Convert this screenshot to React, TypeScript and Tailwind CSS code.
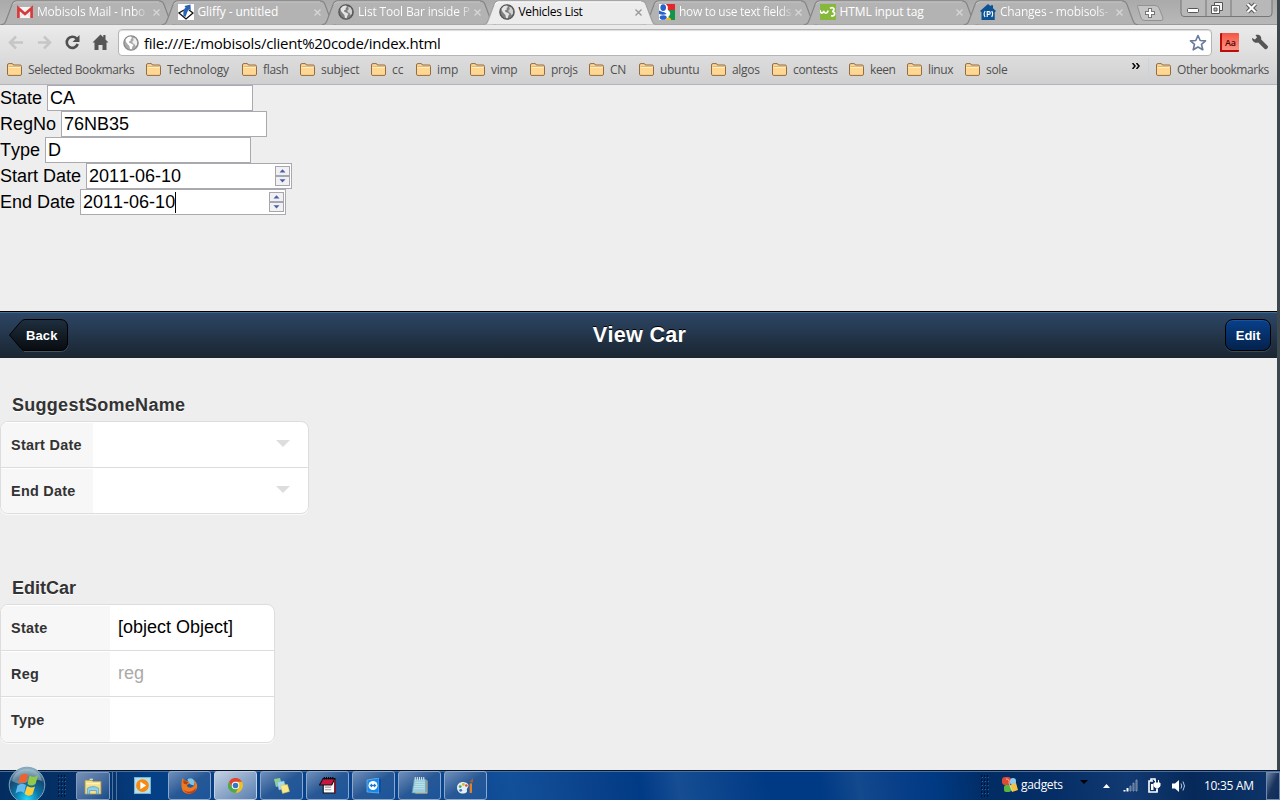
import React from "react";

type IconProps = { children: React.ReactNode; size?: number; box?: string };

function Icon({ children, size = 16, box = "0 0 16 16" }: IconProps) {
  return (
    <svg width={size} height={size} viewBox={box} className="block shrink-0" fill="none">
      {children}
    </svg>
  );
}

function Globe({ light = false }: { light?: boolean }) {
  const c = light ? "#8b8b8b" : "#555";
  return (
    <Icon>
      <circle cx="8" cy="8" r="7.2" fill={c} stroke={c} strokeWidth="1.2" />
      <circle cx="8" cy="8" r="6.4" fill={light ? "#aaa" : "#808080"} />
      <path d="M2.500 4.500L5 2l3-.5 1 1.500-1.500 1L8 5.200 6 6.500l.2 1.300L9 9l1.500 1-1.200 1.800-.6 2.400L7 14l-.6-3L4.500 9 3 7z" fill={light ? "#fff" : "#e4e4e4"} />
      <path d="M10 3l2.500.5L14 6.500v3l-1.500 1.700-1-2.200-1.800-.8L9.500 6l1.400-.8z" fill={light ? "#f2f2f2" : "#d0d0d0"} />
    </Icon>
  );
}

const mail = (
  <Icon>
    <rect y="3" width="16" height="11" fill="#f5f5f5" />
    <path d="M3 13L6.5 8.5M13 13L9.5 8.5" stroke="#ddd" />
    <path d="M1.4 14V4.2L8 10l6.6-5.8V14" stroke="#d8393a" strokeWidth="2.7" />
  </Icon>
);

const gliffy = (
  <Icon>
    <rect width="16" height="16" fill="#fff" />
    <path d="M6 6L1 9l7 6 7-6-4-3" stroke="#111" strokeWidth="1.3" />
    <path d="M5.500 12c-.5-4 0-7 2-8.500L6.500 2 12.500.5l.3 6-1.500-1.200C9 7 9 9.500 7.500 13z" fill="#2862b5" />
  </Icon>
);

const google = (
  <Icon>
    <rect width="16" height="16" rx="1" fill="#fff" />
    <path d="M7 0h9v6H9z" fill="#e3262c" />
    <path d="M8 6h8v10h-6z" fill="#149447" />
    <path d="M5 16c0-3 6-3 7-1v1z" fill="#f8b517" />
    <path d="M6 0c4 2 3 4 2 5.500 4 2 4 5 1.500 7L7 16H0V0z" fill="#fff" />
    <ellipse cx="4.200" cy="3.600" rx="2.800" ry="3.400" fill="#2861cc" />
    <path d="M0 6.500c3 2 6 1 7.500 3.500-2 1-5 1-7.500 0z" fill="#2861cc" />
    <ellipse cx="4.200" cy="13.500" rx="3.500" ry="2.300" fill="#2861cc" />
    <path d="M7 16c0-2 3-3 4-1v1z" fill="#f8b517" />
  </Icon>
);

const w3 = (
  <Icon>
    <rect width="16" height="16" fill="#86b83c" />
    <path d="M0 6c.5 4 3 4 3.700 1 .8 3 3.500 3 4.500-.5M10 4.200c4-2 5.500 2 2.200 3.300 3.500.3 3.400 5-1.200 4.300" stroke="#fff" strokeWidth="1.6" />
  </Icon>
);

const changes = (
  <Icon>
    <path d="M8 0l2.700 2.200V1.200H13v3L16 7l-1.300 1.300V16H1.500V8.300L0 7z" fill="#0c5394" />
    <path d="M5.200 7C3.800 9 4 11.400 5.100 13M11.800 7c1.200 2 1.100 4-.1 6M7.200 13V7.600h1.600c2 0 2 2.800 0 2.800H7.200" stroke="#fff" strokeWidth="1.100" />
  </Icon>
);

type TabInfo = { title: string; icon: React.ReactNode; active?: boolean; cls: string };

const fade85 = "bg-gradient-to-r from-white from-90% to-[#c8c8c8] bg-clip-text text-transparent";

const tabs: TabInfo[] = [
  { title: "Mobisols Mail - Inbo", icon: mail, cls: `tracking-[-0.2px] ${fade85}` },
  { title: "Gliffy - untitled", icon: gliffy, cls: "tracking-[-0.1px] text-white" },
  { title: "List Tool Bar inside P", icon: <Globe />, cls: `tracking-[-0.17px] ${fade85}` },
  { title: "Vehicles List", icon: <Globe />, active: true, cls: "tracking-[-0.3px] text-black" },
  { title: "how to use text fields", icon: google, cls: `tracking-[-0.32px] ${fade85}` },
  { title: "HTML input tag", icon: w3, cls: "tracking-[-0.1px] text-white" },
  { title: "Changes - mobisols-", icon: changes, cls: `tracking-[-0.22px] ${fade85}` },
];

function Tab({ title, icon, active, cls }: TabInfo) {
  return (
    <div className={`relative flex h-[25px] w-[160.5px] shrink-0 items-center pl-[13px] ${active ? "z-10" : ""}`}>
      <svg className="absolute left-[-3px] top-0" width="175" height="25" viewBox="0 0 175 25">
        <path
          d="M0 24.5C4 24.5 4.5 22 6 18L11 4.5C12 2 13 .8 15.5 .8H158C161 .8 162 2 163 4.5L168 18C169.5 22 170 24.5 174 24.5"
          fill={active ? "#ececec" : "#b3b3b3"}
          stroke={active ? "#a0a0a0" : "#858585"}
          strokeWidth="1.2"
        />
        <path d="M12 4.5Q13 1.9 15.5 1.9H158" fill="none" stroke={active ? "#fff" : "#c8c8c8"} />
      </svg>
      <div className="relative -top-px flex w-full items-center pt-px">
        {icon}
        <div className="ml-1 flex w-[112px]">
          <span className={`whitespace-nowrap text-[12px] leading-[18px] ${cls}`}>{title}</span>
        </div>
        <svg width="7" height="7" viewBox="0 0 7 7" className="ml-[4px] mt-px shrink-0">
          <path d="M.5 .5l6 6M6.5 .5l-6 6" stroke={active ? "#999" : "#d6d6d6"} strokeWidth="1.4" />
        </svg>
      </div>
    </div>
  );
}

function Folder() {
  return (
    <svg width="15" height="13" viewBox="0 0 15 13" className="block shrink-0">
      <path d="M.5 11.3V2Q.5 .6 2 .6H5Q6 .6 6.4 2H13Q14.5 2 14.5 3.5V11.2Q14.5 12.4 13 12.4H2Q.5 12.4 .5 11.3z" fill="#fed893" stroke="#946b42" />
      <path d="M1.5 4.4H13.5" stroke="#fff0ca" />
      <path d="M1.5 3.4H13.5" stroke="#c79b62" strokeWidth=".6" />
    </svg>
  );
}

const bookmarks = [
  { name: "Selected Bookmarks", w: "w-[139px]", t: "tracking-[-0.4px]" },
  { name: "Technology", w: "w-[96px]", t: "tracking-[-0.2px]" },
  { name: "flash", w: "w-[58px]", t: "tracking-[-0.3px]" },
  { name: "subject", w: "w-[71px]", t: "tracking-[-0.3px]" },
  { name: "cc", w: "w-[45px]", t: "tracking-[-0.1px]" },
  { name: "imp", w: "w-[54px]", t: "tracking-[-0.1px]" },
  { name: "vimp", w: "w-[60px]", t: "tracking-[-0.3px]" },
  { name: "projs", w: "w-[59px]", t: "tracking-[-0.3px]" },
  { name: "CN", w: "w-[50px]", t: "tracking-[-0.3px]" },
  { name: "ubuntu", w: "w-[72px]", t: "tracking-[-0.3px]" },
  { name: "algos", w: "w-[61px]", t: "tracking-[-0.3px]" },
  { name: "contests", w: "w-[77px]", t: "tracking-[-0.3px]" },
  { name: "keen", w: "w-[58px]", t: "tracking-[-0.4px]" },
  { name: "linux", w: "w-[58px]", t: "tracking-[-0.4px]" },
  { name: "sole", w: "w-[60px]", t: "tracking-[-0.3px]" },
];

function Bookmark({ name, w, t }: { name: string; w: string; t: string }) {
  return (
    <div className={`flex shrink-0 items-center gap-[6px] ${w}`}>
      <Folder />
      <span className={`whitespace-nowrap text-[12px] leading-4 text-[#505050] ${t}`}>{name}</span>
    </div>
  );
}

function BrowserChrome() {
  return (
    <div className="h-[85px] shrink-0 font-['Open_Sans','Noto_Sans',sans-serif]">
      <div className="flex h-[25px] bg-gradient-to-b from-[#aaa] to-[#b9b9b9] pl-1 shadow-[inset_0_-1px_#999]">
        {tabs.map((t) => (
          <Tab key={t.title} {...t} />
        ))}
        <svg width="28" height="17" viewBox="0 0 28 17" className="ml-2 mt-[5px] shrink-0">
          <path d="M1.5 1.5Q.5 .5 3 .5H19Q22 .5 23 3L27 13Q27.5 15.5 25 15.5H9Q6 15.5 5 13z" fill="#c4c4c4" stroke="#929292" />
          <path d="M9 8H19M14 3V13" stroke="#777" strokeWidth="4" />
          <path d="M10 8H18M14 4V12" stroke="#fff" strokeWidth="2" />
        </svg>
        <svg width="94" height="18" viewBox="0 0 94 18" className="ml-[16px] shrink-0">
          <path d="M1 0V13Q1 16.5 4 16.5H89Q92 16.5 92 13V0" fill="#b8b8b8" stroke="#777" />
          <path d="M26 0V16M51 0V16" stroke="#777" />
          <rect x="7.500" y="8.500" width="11" height="4" rx="1" fill="#fff" stroke="#555" />
          <path d="M34.500 2.500h8v8h-8z" fill="#f4f4f4" stroke="#555" />
          <path d="M31.500 5.500h8v8h-8z" fill="#fff" stroke="#555" />
          <path d="M34 8h3v3h-3z" fill="#bbb" stroke="#555" />
          <path d="M67.500 4l8 8M75.500 4l-8 8" stroke="#555" strokeWidth="4.200" />
          <path d="M67.500 4l8 8M75.500 4l-8 8" stroke="#fff" strokeWidth="2.200" />
        </svg>
      </div>
      <div className="flex h-[33px] items-center bg-gradient-to-b from-[#ebebeb] to-[#dcdcdc] pt-[2px]">
        <svg width="118" height="32" viewBox="0 0 118 32" className="shrink-0" fill="none">
          <path d="M10 15.500H23M16 9.500l-6 6 6 6M38 15.500H50M44 9.500l6 6-6 6" stroke="#c6c6c6" strokeWidth="2.500" />
          <path d="M76.500 11.500A5.600 5.600 0 1 0 77.700 17" stroke="#505050" strokeWidth="2.600" />
          <path d="M79.500 8v7h-7z" fill="#505050" />
          <path d="M92.500 15.500l8-8 2.800 2.800V8h2.200v4.500l3 3h-2V23H102.500v-5h-4v5H94.500V15.500z" fill="#555" />
        </svg>
        <div className="flex h-[27px] w-[1094px] shrink-0 items-center rounded-[4px] border border-[#b5b5b5] bg-white pl-1 shadow-[inset_0_1px_1px_#ddd]">
          <Globe light />
          <span className="ml-[5px] grow whitespace-nowrap text-[15px] leading-5 tracking-[-0.28px] text-black">file:///E:/mobisols/client%20code/index.html</span>
          <svg width="18" height="18" viewBox="0 0 18 18" className="mr-[4px]">
            <path d="M9 1.500l2.200 5 5.300.4-4 3.500 1.300 5.400L9 13l-4.800 2.800 1.300-5.400-4-3.500 5.300-.4z" fill="#fff" stroke="#68799b" strokeWidth="1.600" strokeLinejoin="round" />
          </svg>
        </div>
        <div className="ml-2 flex h-[19px] w-[19px] shrink-0 items-end justify-center rounded-[1px] border-b-2 border-l-2 border-[#b90f0b] bg-gradient-to-b from-[#f45441] to-[#fa9285]">
          <span className="text-[9px] font-semibold leading-[14px] text-[#500]">Aa</span>
        </div>
        <svg width="18" height="18" viewBox="0 0 18 18" className="ml-[12px] shrink-0">
          <path d="M1 4l3 1.500L6 3.300 4.500 1C8 0 10.800 2 10.200 5.500l6.500 6.500c1.300 1.500-1.500 4.200-3 3L7.200 8.600C4 9.500 1 7.500 1 4z" fill="#555" />
        </svg>
      </div>
      <div className="flex h-[27px] items-center border-b border-[#b3b4bf] bg-gradient-to-b from-[#dcdcdc] to-[#d0d0d0] pb-[3px] pl-[7px]">
        {bookmarks.map((b) => (
          <Bookmark key={b.name} {...b} />
        ))}
        <svg width="8" height="6" viewBox="0 0 8 6" className="mb-[8px] ml-[107px] shrink-0">
          <path d="M.5 0L3 3 .5 6M4.500 0L7 3 4.500 6" fill="none" stroke="#000" strokeWidth="1.500" />
        </svg>
        <div className="ml-[8px] mr-[7px] h-6 w-px shrink-0 bg-[#c8d4e0]" />
        <Bookmark name="Other bookmarks" w="w-[116px]" t="tracking-[-0.45px]" />
      </div>
    </div>
  );
}

function Stepper() {
  return (
    <svg width="16" height="20" viewBox="0 0 16 20" className="block">
      <rect x=".5" y=".5" width="14" height="9" fill="#f1f1f4" stroke="#a5a6ae" />
      <rect x=".5" y="10.500" width="14" height="9" fill="#f1f1f4" stroke="#a5a6ae" />
      <path d="M4.500 6.500h6L7.500 3.300zM4.500 13.300h6l-3 3.200z" fill="#4b5ea8" />
    </svg>
  );
}

const fields = [
  { label: "State", value: "CA" },
  { label: "RegNo", value: "76NB35" },
  { label: "Type", value: "D" },
  { label: "Start Date", value: "2011-06-10", date: true },
  { label: "End Date", value: "2011-06-10", date: true, caret: true },
];

function Group({ rows, width, labelWidth }: { rows: { label: string; value?: string; hint?: boolean; select?: boolean }[]; width: string; labelWidth: string }) {
  return (
    <div className={`overflow-hidden rounded-[8px] border border-[#ddd] bg-white shadow-[0_1px_#fafafa] ${width}`}>
      {rows.map((r, i) => (
        <div key={r.label} className={`flex ${i < rows.length - 1 ? "h-[46px] border-b border-[#ddd]" : "h-[45px]"}`}>
          <div className={`flex items-center border-t border-white bg-[#f7f7f7] pl-[10px] pt-[2px] text-[14.4px] font-bold tracking-[0.28px] text-[#333] ${labelWidth}`}>{r.label}</div>
          <div className={`flex grow items-center pl-2 text-[18px] ${r.hint ? "text-[#aaa]" : "text-black"}`}>
            {r.value}
            {r.select && (
              <svg width="14" height="7" viewBox="0 0 14 7" className="mb-[3px] ml-auto mr-[18px]">
                <path d="M0 0H14L7 7z" fill="#ddd" />
              </svg>
            )}
          </div>
        </div>
      ))}
    </div>
  );
}

function Page() {
  return (
    <div className="flex h-[685px] flex-col bg-[#eee] font-['Liberation_Sans',Arial,sans-serif] text-[18px] text-black">
      <div className="h-[226px] shrink-0 [font-kerning:none]">
        {fields.map((f) => (
          <div key={f.label} className="flex h-[26px] items-center">
            <span className="mr-[5px] whitespace-nowrap">{f.label}</span>
            <div className="flex h-[26px] w-[206px] items-center border border-[#a9a9b0] bg-white pl-[2px]">
              <span>{f.value}</span>
              {f.caret && <div className="h-[21px] w-px bg-black" />}
              {f.date && <div className="ml-auto"><Stepper /></div>}
            </div>
          </div>
        ))}
      </div>
      <div className="flex h-[47px] shrink-0 items-center justify-between border-t border-black bg-gradient-to-b from-[#2d4767] to-[#1a2530] pl-2 pr-[6px] text-white shadow-[inset_0_1px_#416b90]">
        <div className="relative flex h-[34px] w-[61px] items-center pl-[18px] pt-px">
          <svg width="61" height="34" viewBox="0 0 61 34" className="absolute left-0 top-0">
            <defs>
              <linearGradient id="back" x1="0" y1="0" x2="0" y2="1">
                <stop stopColor="#1f2f3f" />
                <stop offset=".5" stopColor="#131d27" />
                <stop offset="1" stopColor="#080c10" />
              </linearGradient>
            </defs>
            <path d="M16 33.500H52Q59 33.500 60 27" fill="none" stroke="#435362" />
            <path d="M1.500 17L12.500 4Q14.500 1.500 17 1.500H52Q59.500 1.500 59.500 9V25Q59.500 32.500 52 32.500H17Q14.500 32.500 12.500 30z" fill="url(#back)" stroke="#000" />
          </svg>
          <span className="relative text-[13px] font-bold tracking-[0.1px]">Back</span>
        </div>
        <span className="mr-[15px] text-[21.6px] font-bold tracking-[0.3px] [font-kerning:none] [text-shadow:0_-1px_#000]">View Car</span>
        <div className="flex h-[32px] w-[46px] items-center justify-center rounded-[8px] border border-black bg-gradient-to-b from-[#08408a] to-[#04224c] pt-px text-[13px] font-bold shadow-[0_1px_#3b4a58,inset_0_1px_#1c5299]">Edit</div>
      </div>
      <div className="flex grow flex-col pt-[37px]">
        <h2 className="mb-[5px] pl-3 text-[18px] font-bold leading-[21px] tracking-[0.28px] text-[#333] [text-shadow:0_1px_#fff]">SuggestSomeName</h2>
        <Group
          width="w-[309px]"
          labelWidth="w-[92px]"
          rows={[
            { label: "Start Date", select: true },
            { label: "End Date", select: true },
          ]}
        />
        <h2 className="mb-[5px] mt-[64px] pl-3 text-[18px] font-bold leading-[21px] text-[#333] [text-shadow:0_1px_#fff]">EditCar</h2>
        <Group
          width="w-[275px]"
          labelWidth="w-[109px]"
          rows={[{ label: "State", value: "[object Object]" }, { label: "Reg", value: "reg", hint: true }, { label: "Type" }]}
        />
      </div>
    </div>
  );
}

const explorer = (
  <Icon size={18}>
    <path d="M1 3h6l1 1h7v11H1z" fill="#f5df8b" stroke="#c7a84c" strokeWidth=".7" />
    <path d="M2 6h12M5 2h3" stroke="#fff7cf" />
    <path d="M3 15v-5q5-3 10 0v5h-2v-3H5v3z" fill="#8bd0ee" stroke="#4b98c5" strokeWidth=".6" />
  </Icon>
);
const media = (
  <Icon size={17}>
    <rect x=".5" y=".5" width="15" height="15" fill="#b8e1ee" stroke="#77b5d5" />
    <circle cx="8" cy="8" r="6" fill="#f58a12" />
    <path d="M6 4.500v7L11.500 8z" fill="#fff" />
  </Icon>
);
const firefox = (
  <Icon size={17}>
    <circle cx="8.500" cy="7.500" r="6.500" fill="#1d5ca5" />
    <path d="M6 2c3-2 7 0 7 3l-1 3-3-1-2-2z" fill="#7cc4e8" />
    <path d="M1.500 1l1.500 2 4 1 1.500 2-3 1.500c0 2.500 4 3.500 6 1.500s1.500-4 0-6c4 1 5 7 2 10-3.500 4-9.500 3.500-12 0C0 9 0 5 1.500 1z" fill="#ef7920" />
    <path d="M2 11c2 4 9 4 12-1 0 7-10 7-12 1z" fill="#ca3b13" />
    <path d="M2 3l.5 3L5 7l2-2z" fill="#b5420f" />
  </Icon>
);
const chrome = (
  <Icon size={15}>
    <circle cx="8" cy="8" r="8" fill="#eac126" />
    <path d="M8 4h7a8 8 0 0 0-14 0l3.500 6z" fill="#df4337" />
    <path d="M1 4A8 8 0 0 0 8 16l3.500-6H4.500z" fill="#4da84e" />
    <circle cx="8" cy="8" r="4" fill="#fff" />
    <circle cx="8" cy="8" r="3" fill="#3776c7" />
  </Icon>
);
const notes = (
  <Icon size={16}>
    <path d="M0 1l6-1 2 7-6 2z" fill="#91d28b" />
    <path d="M3 4l7-1 2 7-7 2z" fill="#a8dbf6" stroke="#73aad2" strokeWidth=".5" />
    <path d="M6.500 7.500l7-1 2 7-7 2z" fill="#f9e988" stroke="#cfb950" strokeWidth=".5" />
  </Icon>
);
const notebook = (
  <Icon size={17}>
    <path d="M4 2h11v13H4z" fill="#fff" stroke="#111" />
    <path d="M4 1.500h11l-3 6H.5z" fill="#c61743" stroke="#111" />
    <path d="M5 0v2m2-2v2m2-2v2m2-2v2m2-2v2" stroke="#000" />
    <path d="M5.500 9.500h6M5.500 12h6" stroke="#999" />
    <path d="M15 3v12" stroke="#8b1425" strokeWidth="1.500" />
  </Icon>
);
const viewer = (
  <Icon size={16}>
    <path d="M1 2l12-2v15l-12-1z" fill="#1689e8" stroke="#8bc8fa" strokeWidth=".6" />
    <path d="M13 0l2 1v13l-2 1z" fill="#0a4fa1" />
    <circle cx="7" cy="7.500" r="4.500" fill="#fff" />
    <path d="M3.500 7.500l2.500-2v1.200h2V5.500l2.500 2-2.500 2V8.300H6v1.200z" fill="#1779d4" />
  </Icon>
);
const notepad = (
  <Icon size={17}>
    <path d="M3 2h11v13H1z" fill="#9acddc" stroke="#5b93a9" strokeWidth=".6" />
    <path d="M15 3v12H4" stroke="#d7c894" />
    <path d="M4 5h9M4 7h9M3 9h10M3 11h10" stroke="#d3edf3" strokeWidth=".6" />
    <path d="M4 0v3m2-3v3m2-3v3m2-3v3m2-3v3" stroke="#dae4e8" />
  </Icon>
);
const paint = (
  <Icon size={17}>
    <path d="M0 10c0-4 4-6 7-5 5 1 4 4 3 5-2 2 1 4-2 5-4 2-8-1-8-5z" fill="#e4edf2" />
    <circle cx="3" cy="9" r="1.300" fill="#4aa64e" />
    <circle cx="6" cy="7" r="1.300" fill="#e2b12a" />
    <circle cx="3.500" cy="12.500" r="1.300" fill="#3676ca" />
    <circle cx="8.800" cy="8" r="1.200" fill="#d94735" />
    <path d="M13 15V6" stroke="#e2802c" strokeWidth="2.200" />
    <path d="M11.500 4.500c2-.5 2-2.500 3.500-3.500-.5 1.500 1 2.500-.5 4.500z" fill="#aa6133" />
  </Icon>
);

const apps = [firefox, chrome, notes, notebook, viewer, notepad, paint];

function Grip() {
  return (
    <svg width="9" height="22" viewBox="0 0 9 22" className="shrink-0">
      {[0, 1, 2, 3, 4, 5].map((r) => (
        <path key={r} d={`M1 ${r * 4 + 1}h1m2 0h1m2 0h1`} stroke="#000b24" strokeWidth="1.400" />
      ))}
      {[0, 1, 2, 3, 4].map((r) => (
        <path key={r} d={`M2 ${r * 4 + 2.5}h1m2 0h1m2 0h1`} stroke="#43659b" strokeWidth=".8" />
      ))}
    </svg>
  );
}

function Taskbar() {
  return (
    <div className="flex h-[30px] shrink-0 items-center border-t border-[#06162f] bg-[linear-gradient(80deg,#032d60_0%,#05326a_8%,#053f85_12%,#0a4590_35%,#13509a_40%,#0a438b_46%,#013b85_50%,#164d93_53%,#0c458c_56%,#003a84_60%,#003a84_64%,#13498d_67%,#083f88_70%,#003a82_73%,#022c64_77%,#052e66_82%,#123a72_88%,#06295a_93%,#0e356b_100%)] font-['Open_Sans','Noto_Sans',sans-serif] text-white shadow-[inset_0_1px_#4c6f9e]">
      <svg width="40" height="36" viewBox="0 0 40 36" className="relative -top-[2px] ml-[7px] shrink-0">
        <defs>
          <radialGradient id="orb" cx=".5" cy=".9" r=".85">
            <stop stopColor="#1dd8ff" />
            <stop offset=".4" stopColor="#0c78aa" />
            <stop offset=".75" stopColor="#164970" />
            <stop offset="1" stopColor="#8aadbd" />
          </radialGradient>
        </defs>
        <circle cx="20" cy="19" r="17.800" fill="url(#orb)" stroke="#7ca4bf" />
        <path d="M5 15C8-1 32-1 35 15Q27 12 20 16T5 15z" fill="#cce2e8" opacity=".4" />
        <path d="M13 10q4-4 8-1l-2 8q-4-2-8 1z" fill="#ed6330" />
        <path d="M22.500 9.500q4 2.500 8.500 0l-2.500 8.500q-4 3-8 0z" fill="#91c94a" />
        <path d="M10.500 19.500q4-3 8.500-.5l-2 8q-4-3-8.500.5z" fill="#61b9ee" />
        <path d="M20 20q4 2.500 8 .5l-2.500 8q-4 2.500-8-.5z" fill="#fccd3d" />
      </svg>
      <div className="ml-[10px]"><Grip /></div>
      <div className="ml-[10px] flex h-[28px] w-[34px] shrink-0 items-center justify-center rounded-[2px] border border-[#809bbf] bg-gradient-to-br from-[#7891b5] to-[#164b8a]">{explorer}</div>
      <div className="ml-[2px] h-[28px] w-[5px] border-x border-[#53749f]" />
      <div className="ml-[17px] mr-[17px]">{media}</div>
      <div className="flex gap-[3px]">
        {apps.map((a, i) => (
          <div key={i} className={`flex h-[29px] w-[43px] items-center justify-center rounded-[3px] border ${i === 1 ? "border-[#c2d0e3] bg-gradient-to-br from-[#c4d1e2] to-[#587eb0]" : "border-[#8ba7cc] bg-gradient-to-br from-[#7090ba] via-[#275895] to-[#1b559c]"}`}>
            {a}
          </div>
        ))}
      </div>
      <div className="ml-auto"><Grip /></div>
      <div className="mb-[2px] ml-[13px]">
        <Icon>
          <rect x="0" y="0" width="9" height="8" rx="3" fill="#dc4a36" />
          <rect x="8" y="1" width="6" height="7" rx="3" fill="#8ccdf0" />
          <rect x="2" y="8" width="7" height="7" rx="2" fill="#55b642" />
          <path d="M8 8l6-2 2 7-6 2z" fill="#f3c444" />
          <path d="M4 2q4 0 3 4l3 8" stroke="#fff" opacity=".6" />
        </Icon>
      </div>
      <span className="mb-[2px] ml-[3px] w-[45px] whitespace-nowrap text-[12px] tracking-[-0.3px]">gadgets</span>
      <svg width="8" height="4" viewBox="0 0 8 4" className="mb-[7px] ml-[14px]"><path d="M0 0H8L4 4z" fill="#000" /></svg>
      <svg width="7" height="4" viewBox="0 0 7 4" className="ml-[15px] mt-px"><path d="M0 4H7L3.500 0z" fill="#fff" /></svg>
      <svg width="16" height="13" viewBox="0 0 16 13" className="ml-[13px]">
        <path d="M1.500 12.500V11M4.500 12.500V9" stroke="#fff" strokeWidth="2" />
        <path d="M7 12V7h1v5zM10 12V4h1v8zM13 12V1h1v11z" fill="#243f69" stroke="#8b9db8" strokeWidth=".9" />
      </svg>
      <svg width="14" height="16" viewBox="0 0 14 16" className="ml-2" fill="none">
        <path d="M6 3H2v11h8v-3M4 3V1h4v2" stroke="#fff" strokeWidth="1.600" />
        <path d="M4 6h2.500v6H4z" fill="#fff" />
        <path d="M7 5h6v3q-1 2-3 2T7 8zM8.500 5V2m3 3V2M10 10v4" fill="#fff" stroke="#fff" />
      </svg>
      <svg width="15" height="14" viewBox="0 0 15 14" className="ml-[10px]" fill="none">
        <path d="M1 4.500h3L8 1v12L4 9.500H1z" fill="#fff" />
        <path d="M10 4.500q1.500 2.500 0 5M12 2.500q3 4.500 0 9" stroke="#bac9dc" />
      </svg>
      <span className="ml-[18px] w-[51px] whitespace-nowrap text-[12px] tracking-[-0.3px]">10:35 AM</span>
      <div className="ml-[11px] h-[28px] w-[14px] border border-[#7189ad] bg-gradient-to-br from-[#7587a4] via-[#18345e] to-[#0d2c5b]" />
    </div>
  );
}

export default function App() {
  return (
    <div className="flex h-[800px] w-[1280px] flex-col overflow-hidden bg-[#eee]">
      <div className="flex h-[770px] shrink-0 flex-col border-r-[3px] border-[#3c474e]">
        <BrowserChrome />
        <Page />
      </div>
      <Taskbar />
    </div>
  );
}
